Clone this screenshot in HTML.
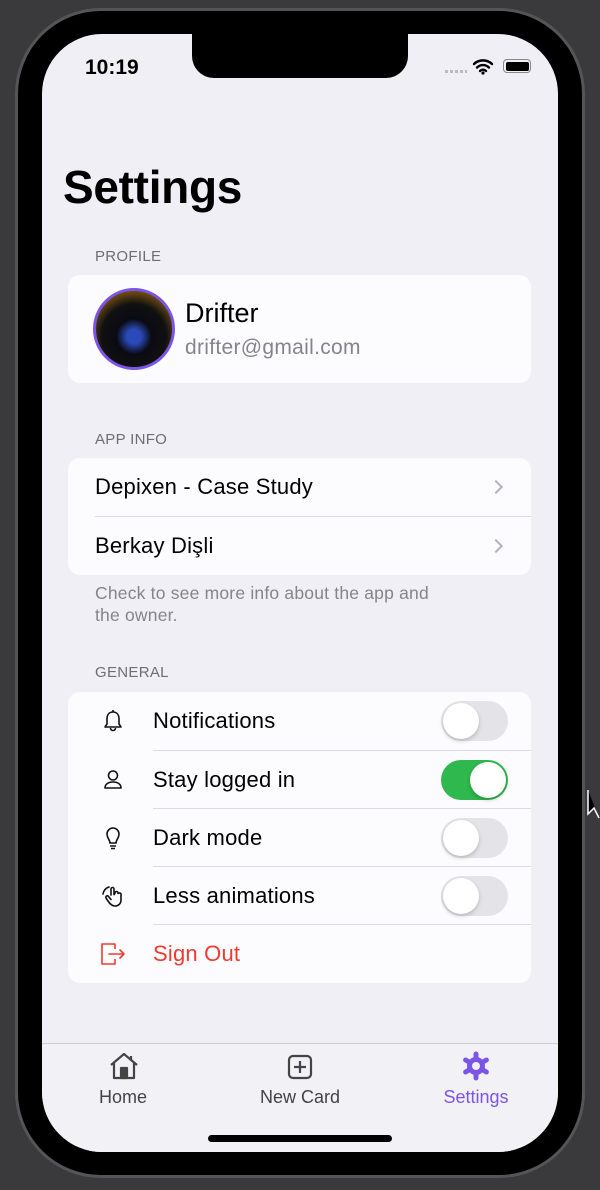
<!DOCTYPE html>
<html><head><meta charset="utf-8"><style>
*{margin:0;padding:0;box-sizing:border-box}
body{width:600px;height:1190px;background:#3a3a3d;position:relative;overflow:hidden;font-family:"Liberation Sans",sans-serif;color:#000}
.a{position:absolute}
.frame{left:15px;top:8px;width:570px;height:1170px;border-radius:86px;background:#000;border:3px solid #555558}
.screen{left:42px;top:34px;width:516px;height:1118px;border-radius:60px;background:#f0eff5;overflow:hidden}
.notch{left:150px;top:0;width:216px;height:44px;background:#000;border-radius:0 0 22px 22px}
.lbl{font-size:15px;color:#6d6d72;letter-spacing:.3px}
.card{background:#fcfcfe;border-radius:12px;left:26px;width:463px}
.row{position:absolute;left:0;right:0;height:58px;display:flex;align-items:center;font-size:22px;letter-spacing:.2px}
.div{position:absolute;right:0;height:1px;background:#dcdce0}
.chev{position:absolute;right:30px;top:24px;width:10px;height:10px;border-right:2px solid #b4b4b8;border-top:2px solid #b4b4b8;transform:rotate(45deg)}
.tg{position:absolute;left:373px;width:67px;height:40px;border-radius:20px;background:#e4e4e8}
.tg::after{content:"";position:absolute;left:2px;top:2px;width:36px;height:36px;border-radius:50%;background:#fff;box-shadow:0 2px 4px rgba(0,0,0,.2)}
.tg.on{background:#2fb84d}
.tg.on::after{left:29px}
.ic{position:absolute;left:31px;width:28px;height:28px}
.tab{font-size:18px;color:#444;text-align:center;width:120px}
</style></head><body>
<div class="a frame"></div>
<div class="a screen">
 <div class="a notch"></div>
 <div class="a" style="left:43px;top:22px;font-size:21px;font-weight:bold">10:19</div>
 <div class="a" style="left:403px;top:36px;width:22px;height:3px;background:repeating-linear-gradient(90deg,#bbb 0 3px,transparent 3px 5px)"></div>
 <svg class="a" style="left:430px;top:23px" width="22" height="18" viewBox="0 0 22 18"><path d="M2 7a13 13 0 0 1 18 0M5 10.5a8.5 8.5 0 0 1 12 0M8 14a4 4 0 0 1 6 0" stroke="#000" stroke-width="2.4" fill="none" stroke-linecap="round"/><circle cx="11" cy="16" r="1.6"/></svg>
 <div class="a" style="left:461px;top:25px;width:28px;height:14px;border:1.5px solid #888;border-radius:4px;padding:1.5px"><div style="width:100%;height:100%;background:#000;border-radius:2px"></div></div>
 <div class="a" style="left:21px;top:126px;font-size:46px;font-weight:bold;letter-spacing:-.3px">Settings</div>
 <div class="a lbl" style="left:53px;top:214px">PROFILE</div>
 <div class="a card" style="top:241px;height:108px">
  <div class="a" style="left:25px;top:13px;width:82px;height:82px;border-radius:50%;border:3px solid #7b55e6;background:radial-gradient(circle at 50% 60%,#2a4ab8 0 12%,#0a0a12 30%,#111 55%,#6a4a12 75%,#3a2a0a)"></div>
  <div class="a" style="left:117px;top:23px;font-size:27px">Drifter</div>
  <div class="a" style="left:117px;top:61px;font-size:21px;color:#858589;letter-spacing:.3px">drifter@gmail.com</div>
 </div>
 <div class="a lbl" style="left:53px;top:397px">APP INFO</div>
 <div class="a card" style="top:424px;height:117px">
  <div class="row" style="top:0;padding-left:27px">Depixen - Case Study<div class="chev"></div></div>
  <div class="div" style="left:27px;top:58px"></div>
  <div class="row" style="top:59px;padding-left:27px">Berkay Dişli<div class="chev"></div></div>
 </div>
 <div class="a" style="left:53px;top:548px;font-size:17.5px;color:#858589;line-height:22px;letter-spacing:.2px">Check to see more info about the app and<br>the owner.</div>
 <div class="a lbl" style="left:53px;top:630px">GENERAL</div>
 <div class="a card" style="top:658px;height:291px">
  <div class="row" style="top:0;padding-left:85px">Notifications</div>
  <svg class="ic" style="top:15px" viewBox="0 0 28 28" fill="none" stroke="#111" stroke-width="1.6" stroke-linejoin="round"><path d="M14 5c-4 0-6 3-6 7v5l-2 3h16l-2-3v-5c0-4-2-7-6-7z"/><path d="M11.5 21a2.5 2.5 0 0 0 5 0"/><path d="M14 3v2"/></svg>
  <div class="tg" style="top:9px"></div>
  <div class="div" style="left:85px;top:58px"></div>
  <div class="row" style="top:59px;padding-left:85px">Stay logged in</div>
  <svg class="ic" style="top:74px" viewBox="0 0 28 28" fill="none" stroke="#111" stroke-width="1.6"><circle cx="14" cy="9.5" r="4.5"/><path d="M6 22c0-4 3.5-6 8-6s8 2 8 6z" stroke-linejoin="round"/></svg>
  <div class="tg on" style="top:68px"></div>
  <div class="div" style="left:85px;top:116px"></div>
  <div class="row" style="top:117px;padding-left:85px">Dark mode</div>
  <svg class="ic" style="top:132px" viewBox="0 0 28 28" fill="none" stroke="#111" stroke-width="1.6"><path d="M11 19c0-3-3-5-3-9a6 6 0 0 1 12 0c0 4-3 6-3 9z"/><path d="M11 22h6M12 24.5h4"/></svg>
  <div class="tg" style="top:126px"></div>
  <div class="div" style="left:85px;top:174px"></div>
  <div class="row" style="top:175px;padding-left:85px">Less animations</div>
  <svg class="ic" style="top:190px" viewBox="0 0 28 28" fill="none" stroke="#111" stroke-width="1.6" stroke-linecap="round"><path d="M12 13V7a1.5 1.5 0 0 1 3 0v6l1-2a1.5 1.5 0 0 1 3 0v1a1.5 1.5 0 0 1 3 1v5c0 4-3 6-6 6s-5-2-7-5l-2-3a1.4 1.4 0 0 1 2.5-1.5l2.5 3"/><path d="M4 12a9 9 0 0 1 6-7"/></svg>
  <div class="tg" style="top:184px"></div>
  <div class="div" style="left:85px;top:232px"></div>
  <div class="row" style="top:233px;padding-left:85px;color:#ee3a30">Sign Out</div>
  <svg class="ic" style="top:248px" viewBox="0 0 28 28" fill="none" stroke="#ee3a30" stroke-width="1.6" stroke-linejoin="round"><path d="M16 9V4H3v20h13v-5"/><path d="M10 14h15M21 10l4 4-4 4" stroke-linecap="round"/></svg>
 </div>
 <div class="a" style="left:0;top:1009px;width:516px;height:109px;background:#f2f1f6;border-top:1px solid #cfcfd3"></div>
 <svg class="a" style="left:66px;top:1017px" width="32" height="30" viewBox="0 0 32 30" fill="none" stroke="#444" stroke-width="2.2" stroke-linejoin="round"><path d="M3 14L16 3l13 11M6 11v16h20V11"/><rect x="13" y="17" width="6" height="10" fill="#444"/><path d="M23 5v4"/></svg>
 <svg class="a" style="left:245px;top:1020px" width="26" height="26" viewBox="0 0 26 26" fill="none" stroke="#444" stroke-width="2.2"><rect x="2" y="2" width="22" height="22" rx="4"/><path d="M13 7v12M7 13h12"/></svg>
 <svg class="a" style="left:420px;top:1017px" width="28" height="30" viewBox="0 0 28 30"><g fill="#7b55e6"><circle cx="14" cy="15" r="9"/><g stroke="#7b55e6" stroke-width="5" stroke-linecap="round"><path d="M14 3v24M3.6 9l20.8 12M3.6 21L24.4 9"/></g></g><circle cx="14" cy="15" r="4" fill="#f2f1f6"/></svg>
 <div class="a tab" style="left:21px;top:1053px">Home</div>
 <div class="a tab" style="left:198px;top:1053px">New Card</div>
 <div class="a tab" style="left:374px;top:1053px;color:#7b55e6">Settings</div>
 <div class="a" style="left:166px;top:1101px;width:184px;height:7px;border-radius:4px;background:#000"></div>
</div>
<svg class="a" style="left:586px;top:788px" width="14" height="32" viewBox="0 0 14 32"><path d="M2 2v24l6-6 5 10" fill="#000" stroke="#fff" stroke-width="1.5"/></svg>
</body></html>
